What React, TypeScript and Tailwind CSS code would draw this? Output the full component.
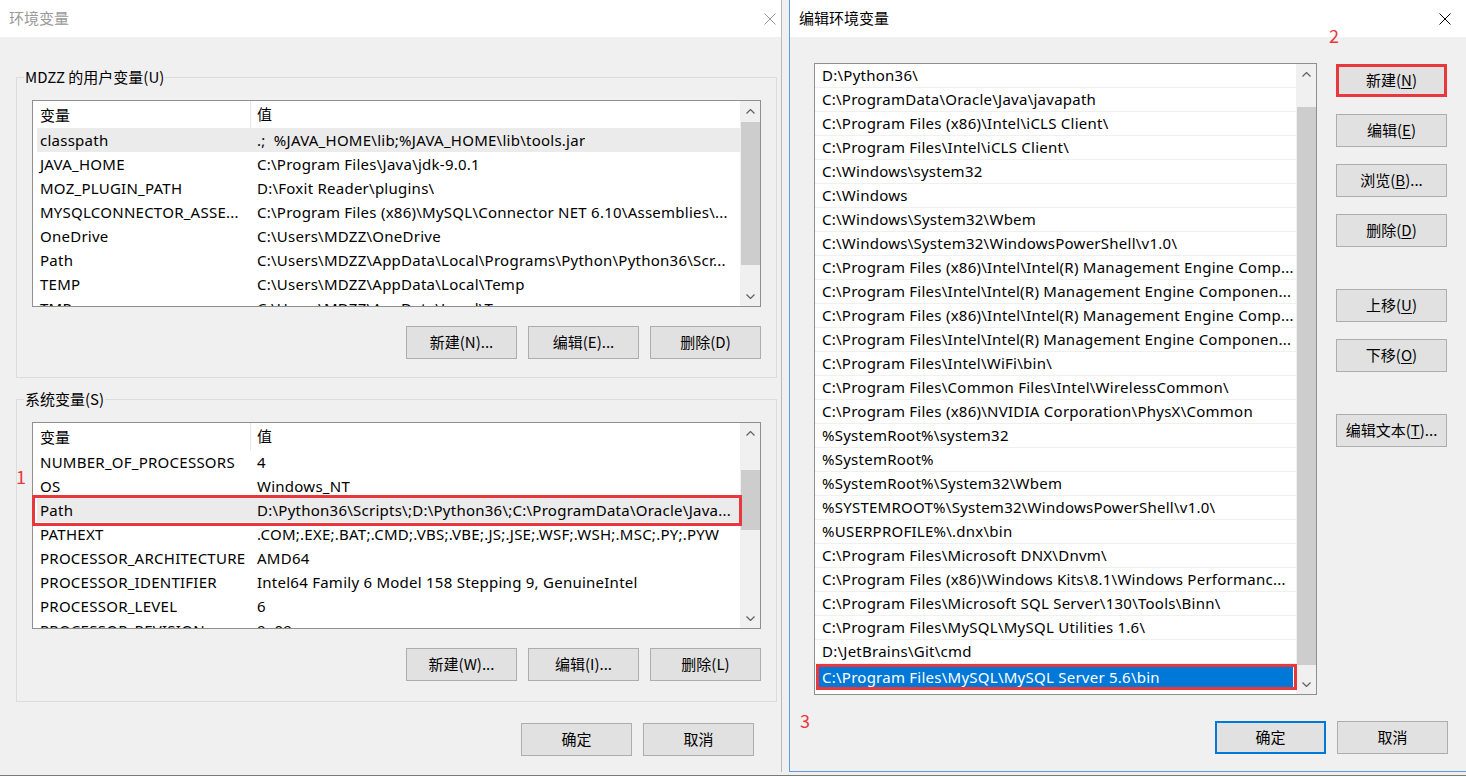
import React from "react";

const F = "font-['Noto_Sans','Noto_Sans_CJK_SC',sans-serif]";
const CJK = "font-['Noto_Sans_CJK_SC','Noto_Sans',sans-serif]";

function Up() {
  return (
    <svg width="9" height="5" viewBox="0 0 9 5" fill="none">
      <path d="M0.5 4.5L4.5 0.5L8.5 4.5" stroke="#606060" strokeWidth="1.2" />
    </svg>
  );
}
function Down() {
  return (
    <svg width="9" height="5" viewBox="0 0 9 5" fill="none">
      <path d="M0.5 0.5L4.5 4.5L8.5 0.5" stroke="#606060" strokeWidth="1.2" />
    </svg>
  );
}
function CloseX({ color }: { color: string }) {
  return (
    <svg width="12" height="12" viewBox="0 0 12 12" fill="none">
      <path d="M0.5 0.5L11.5 11.5M11.5 0.5L0.5 11.5" stroke={color} strokeWidth="1" />
    </svg>
  );
}

function VScroll({ before, thumb }: { before: string; thumb: string }) {
  return (
    <div className="flex w-[20px] shrink-0 flex-col bg-[#f0f0f0]">
      <div className="flex h-[20px] shrink-0 items-center justify-center">
        <Up />
      </div>
      <div className={"shrink-0 " + before} />
      <div className={"ml-[1px] shrink-0 bg-[#cdcdcd] " + thumb} />
      <div className="flex-1" />
      <div className="flex h-[20px] shrink-0 items-center justify-center">
        <Down />
      </div>
    </div>
  );
}

function Btn({ children, className = "" }: { children: React.ReactNode; className?: string }) {
  return (
    <div
      className={
        "flex h-[33px] w-[111px] shrink-0 items-center justify-center bg-[#e1e1e1] text-[15px] text-black " +
        CJK +
        " " +
        (className || "border border-[#adadad]")
      }
    >
      {children}
    </div>
  );
}

type Row = [string, string];

function VarList({
  rows,
  hi,
  scroll,
  children,
}: {
  rows: Row[];
  hi: number;
  scroll: React.ReactNode;
  children?: React.ReactNode;
}) {
  return (
    <div className="relative flex h-[207px] w-[729px] border border-[#8f8f8f] bg-white">
      <div className="flex min-w-0 flex-1 flex-col overflow-hidden">
        <div className="flex h-[27px] shrink-0 items-center">
          <div className={"h-full w-[218px] shrink-0 border-r border-[#e5e5e5] pl-[7px] text-[15px] leading-[27px] " + CJK}>
            变量
          </div>
          <div className={"pl-[6px] text-[15px] " + CJK}>值</div>
        </div>
        {rows.map(([k, v], i) => (
          <div key={i} className="h-[24px] shrink-0 pl-[4px]">
            <div
              className={
                "flex h-full items-center whitespace-pre text-[15px] tracking-[0.25px] text-black " +
                F +
                " " +
                (i === hi ? "bg-[#ebebeb]" : "")
              }
            >
              <div className="w-[214px] shrink-0 overflow-hidden pl-[3px]">{k}</div>
              <div className="overflow-hidden pl-[6px]">{v}</div>
            </div>
          </div>
        ))}
      </div>
      {scroll}
      {children}
    </div>
  );
}

const userRows: Row[] = [
  ["classpath", ".;  %JAVA_HOME\\lib;%JAVA_HOME\\lib\\tools.jar"],
  ["JAVA_HOME", "C:\\Program Files\\Java\\jdk-9.0.1"],
  ["MOZ_PLUGIN_PATH", "D:\\Foxit Reader\\plugins\\"],
  ["MYSQLCONNECTOR_ASSE...", "C:\\Program Files (x86)\\MySQL\\Connector NET 6.10\\Assemblies\\..."],
  ["OneDrive", "C:\\Users\\MDZZ\\OneDrive"],
  ["Path", "C:\\Users\\MDZZ\\AppData\\Local\\Programs\\Python\\Python36\\Scr..."],
  ["TEMP", "C:\\Users\\MDZZ\\AppData\\Local\\Temp"],
  ["TMP", "C:\\Users\\MDZZ\\AppData\\Local\\Temp"],
];

const sysRows: Row[] = [
  ["NUMBER_OF_PROCESSORS", "4"],
  ["OS", "Windows_NT"],
  ["Path", "D:\\Python36\\Scripts\\;D:\\Python36\\;C:\\ProgramData\\Oracle\\Java..."],
  ["PATHEXT", ".COM;.EXE;.BAT;.CMD;.VBS;.VBE;.JS;.JSE;.WSF;.WSH;.MSC;.PY;.PYW"],
  ["PROCESSOR_ARCHITECTURE", "AMD64"],
  ["PROCESSOR_IDENTIFIER", "Intel64 Family 6 Model 158 Stepping 9, GenuineIntel"],
  ["PROCESSOR_LEVEL", "6"],
  ["PROCESSOR_REVISION", "9e09"],
];

const paths = [
  "D:\\Python36\\",
  "C:\\ProgramData\\Oracle\\Java\\javapath",
  "C:\\Program Files (x86)\\Intel\\iCLS Client\\",
  "C:\\Program Files\\Intel\\iCLS Client\\",
  "C:\\Windows\\system32",
  "C:\\Windows",
  "C:\\Windows\\System32\\Wbem",
  "C:\\Windows\\System32\\WindowsPowerShell\\v1.0\\",
  "C:\\Program Files (x86)\\Intel\\Intel(R) Management Engine Comp...",
  "C:\\Program Files\\Intel\\Intel(R) Management Engine Componen...",
  "C:\\Program Files (x86)\\Intel\\Intel(R) Management Engine Comp...",
  "C:\\Program Files\\Intel\\Intel(R) Management Engine Componen...",
  "C:\\Program Files\\Intel\\WiFi\\bin\\",
  "C:\\Program Files\\Common Files\\Intel\\WirelessCommon\\",
  "C:\\Program Files (x86)\\NVIDIA Corporation\\PhysX\\Common",
  "%SystemRoot%\\system32",
  "%SystemRoot%",
  "%SystemRoot%\\System32\\Wbem",
  "%SYSTEMROOT%\\System32\\WindowsPowerShell\\v1.0\\",
  "%USERPROFILE%\\.dnx\\bin",
  "C:\\Program Files\\Microsoft DNX\\Dnvm\\",
  "C:\\Program Files (x86)\\Windows Kits\\8.1\\Windows Performanc...",
  "C:\\Program Files\\Microsoft SQL Server\\130\\Tools\\Binn\\",
  "C:\\Program Files\\MySQL\\MySQL Utilities 1.6\\",
  "D:\\JetBrains\\Git\\cmd",
  "C:\\Program Files\\MySQL\\MySQL Server 5.6\\bin",
];

function U({ children }: { children: React.ReactNode }) {
  return <span className="underline underline-offset-2">{children}</span>;
}

export default function App() {
  return (
    <div className={"relative flex h-[777px] w-[1466px] flex-col overflow-hidden bg-[#f0f0f0] text-black " + F}>
      <div className="flex h-[775px] shrink-0">
        {/* Left dialog */}
        <div className="flex h-[772px] w-[782px] shrink-0 flex-col border-r border-[#b9b9b9] bg-[#f0f0f0]">
          <div className="flex h-[37px] shrink-0 items-center justify-between bg-white pl-[9px] pr-[5px]">
            <span className={"text-[15px] text-[#9a9a9a] " + CJK}>环境变量</span>
            <CloseX color="#9a9a9a" />
          </div>
          <div className="flex flex-1 flex-col pl-[16px] pr-[4px] pt-[30px]">
            <fieldset className="border border-[#dcdcdc] px-[15px] pb-[18px]">
              <legend className={"-ml-[8px] px-[1px] text-[15px] leading-[20px] " + CJK}>MDZZ 的用户变量(U)</legend>
              <div className="mt-[13px]">
                <VarList rows={userRows} hi={0} scroll={<VScroll before="h-[1px]" thumb="h-[143px]" />} />
              </div>
              <div className="mt-[19px] flex justify-end gap-[11px]">
                <Btn>新建(N)...</Btn>
                <Btn>编辑(E)...</Btn>
                <Btn>删除(D)</Btn>
              </div>
            </fieldset>
            <fieldset className="mt-[11px] border border-[#dcdcdc] px-[15px] pb-[20px]">
              <legend className={"-ml-[8px] px-[1px] text-[15px] leading-[20px] " + CJK}>系统变量(S)</legend>
              <div className="mt-[13px]">
                <VarList rows={sysRows} hi={2} scroll={<VScroll before="h-[27px]" thumb="h-[60px]" />}>
                  <div className="absolute left-[-1px] top-[72px] h-[31px] w-[710px] border-[3px] border-[#e8383d]" />
                </VarList>
              </div>
              <div className="mt-[19px] flex justify-end gap-[11px]">
                <Btn>新建(W)...</Btn>
                <Btn>编辑(I)...</Btn>
                <Btn>删除(L)</Btn>
              </div>
            </fieldset>
            <div className="mt-[21px] flex justify-end gap-[11px] pr-[23px]">
              <Btn>确定</Btn>
              <Btn>取消</Btn>
            </div>
          </div>
        </div>

        {/* Right dialog */}
        <div className="ml-[7px] flex h-[772px] flex-1 flex-col border-b border-l border-[#5d9edb] bg-[#f0f0f0]">
          <div className="flex h-[37px] shrink-0 items-center justify-between bg-white pl-[9px] pr-[15px]">
            <span className={"text-[15px] text-black " + CJK}>编辑环境变量</span>
            <CloseX color="#000000" />
          </div>
          <div className="flex flex-1 flex-col pl-[24px] pr-[18px] pt-[26px]">
            <div className="flex gap-[19px]">
              <div className="relative flex h-[632px] w-[503px] shrink-0 border border-[#8f8f8f] bg-white">
                <div className="flex min-w-0 flex-1 flex-col overflow-hidden text-[15px] tracking-[0.25px]">
                  {paths.map((p, i) =>
                    i === paths.length - 1 ? (
                      <div key={i} className="h-[24px] shrink-0 pl-[4px] pr-[3px] pt-[2px]">
                        <div className="h-[22px] whitespace-nowrap bg-[#0078d7] pl-[3px] leading-[22px] text-white">{p}</div>
                      </div>
                    ) : (
                      <div
                        key={i}
                        className="h-[24px] shrink-0 overflow-hidden whitespace-nowrap border-b border-[#f0f0f0] pl-[7px] leading-[23px]"
                      >
                        {p}
                      </div>
                    )
                  )}
                </div>
                <VScroll before="h-[23px]" thumb="h-[558px]" />
                <div className="absolute left-[1px] top-[600px] h-[26px] w-[481px] border-[3px] border-[#e8383d]" />
              </div>
              <div className="flex flex-col pt-[1px]">
                <Btn className="border-[3px] border-[#e8383d]">
                  <span>
                    新建(<U>N</U>)
                  </span>
                </Btn>
                <div className="mt-[17px]">
                  <Btn>
                    <span>
                      编辑(<U>E</U>)
                    </span>
                  </Btn>
                </div>
                <div className="mt-[17px]">
                  <Btn>
                    <span>
                      浏览(<U>B</U>)...
                    </span>
                  </Btn>
                </div>
                <div className="mt-[17px]">
                  <Btn>
                    <span>
                      删除(<U>D</U>)
                    </span>
                  </Btn>
                </div>
                <div className="mt-[42px]">
                  <Btn>
                    <span>
                      上移(<U>U</U>)
                    </span>
                  </Btn>
                </div>
                <div className="mt-[17px]">
                  <Btn>
                    <span>
                      下移(<U>O</U>)
                    </span>
                  </Btn>
                </div>
                <div className="mt-[42px]">
                  <Btn>
                    <span>
                      编辑文本(<U>T</U>)...
                    </span>
                  </Btn>
                </div>
              </div>
            </div>
            <div className="mt-[26px] flex justify-end gap-[11px]">
              <Btn className="border-2 border-[#0078d7]">确定</Btn>
              <Btn>取消</Btn>
            </div>
          </div>
        </div>
      </div>
      <div className="h-[1px] shrink-0 bg-[#7a7a7a]" />
      <div className="h-[1px] shrink-0 bg-white" />

      {/* annotations */}
      <span className={"absolute left-[16px] top-[465px] text-[18px] leading-[22px] text-[#e8383d] " + CJK}>1</span>
      <span className={"absolute left-[1329px] top-[24px] text-[18px] leading-[22px] text-[#e8383d] " + CJK}>2</span>
      <span className={"absolute left-[800px] top-[709px] text-[18px] leading-[22px] text-[#e8383d] " + CJK}>3</span>
    </div>
  );
}
